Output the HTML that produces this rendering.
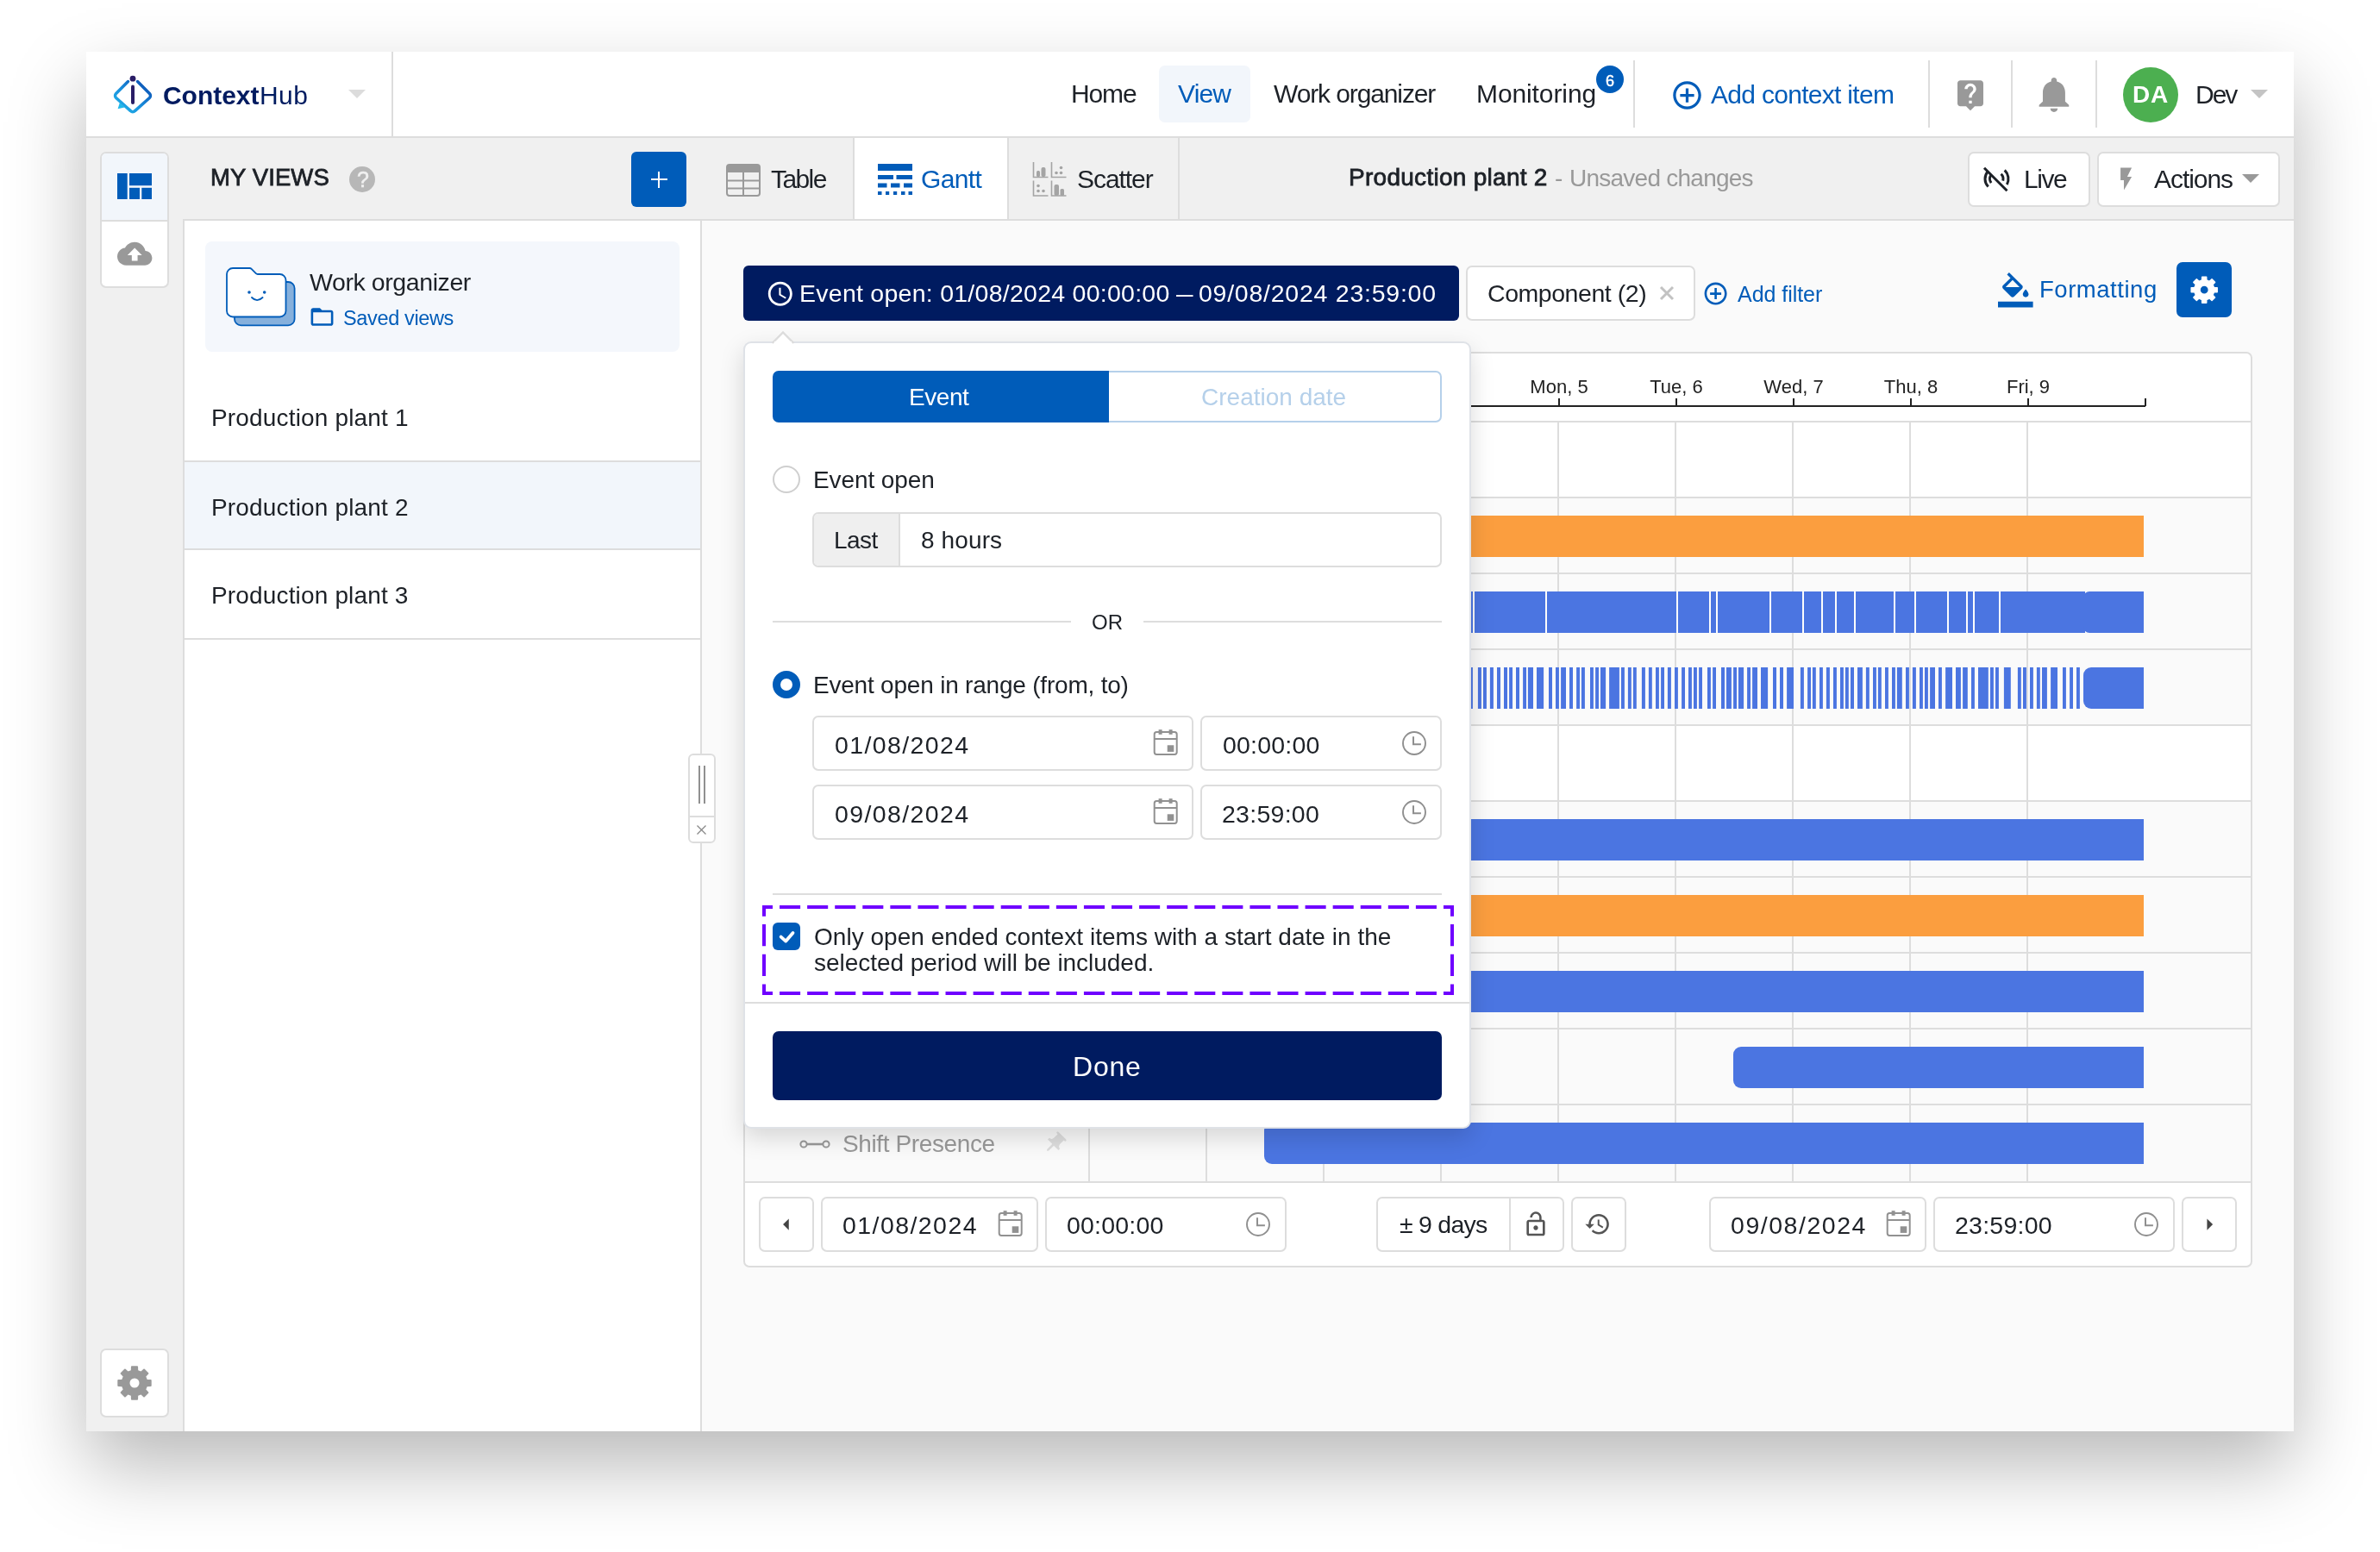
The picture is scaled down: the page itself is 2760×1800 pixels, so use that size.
<!DOCTYPE html>
<html lang="en"><head><meta charset="utf-8"><title>ContextHub - Gantt view</title>
<style>
html,body{margin:0;padding:0;background:#fff;}
body{width:2760px;height:1800px;position:relative;overflow:hidden;font-family:"Liberation Sans",sans-serif;}
body>div,body>svg,body>span{position:absolute;box-sizing:border-box;}
.t{white-space:nowrap;display:block;will-change:transform;}
svg{display:block;overflow:visible;}
</style></head><body>
<div style="left:100px;top:60px;width:2560px;height:1600px;background:#f0f0f0;box-shadow:0 40px 84px rgba(0,0,0,.28);"></div>
<div style="left:100px;top:60px;width:2560px;height:98px;background:#fff;"></div>
<div style="left:100px;top:158px;width:2560px;height:2px;background:#dddddd;"></div>
<div style="left:454px;top:60px;width:2px;height:98px;background:#dddddd;"></div>
<svg style="left:128px;top:84px;" width="52" height="52" viewBox="0 0 52 52"><defs><linearGradient id="lg" x1="0" y1="1" x2="1" y2="0"><stop offset="0" stop-color="#22b8ea"/><stop offset=".45" stop-color="#1a8fdc"/><stop offset="1" stop-color="#0a47ad"/></linearGradient></defs><path d="M20.5 10.5 L6.6 24.4 a3.6 3.6 0 0 0 0 5.1 L23.4 44.6 a3.6 3.6 0 0 0 5.1 0 L45.4 29.5 a3.6 3.6 0 0 0 0 -5.1 L31.5 10.5" fill="none" stroke="url(#lg)" stroke-width="3.5" stroke-linecap="round" stroke-linejoin="round"/><path d="M10.8 35.2 L8.6 42.2 L16.6 40.6 Z" fill="#22b8ea"/><circle cx="26" cy="7.2" r="3.4" fill="#2a1d66"/><path d="M26 16.5 V35" stroke="#2a1d66" stroke-width="4" stroke-linecap="round"/></svg>
<span class="t" style="left:189.30px;top:95.81px;font-size:30px;line-height:30px;color:#001b60;font-weight:700;letter-spacing:-0.042px;">Context</span>
<span class="t" style="left:300.80px;top:95.81px;font-size:30px;line-height:30px;color:#001b60;letter-spacing:0.425px;">Hub</span>
<svg style="left:404px;top:104px;" width="20" height="10" viewBox="0 0 20 10"><path d="M0 0h20l-10 10z" fill="#dcdcdc"/></svg>
<span class="t" style="left:1241.60px;top:93.61px;font-size:30px;line-height:30px;color:#1d2127;letter-spacing:-1.117px;">Home</span>
<div style="left:1344px;top:76px;width:106px;height:66px;background:#f2f6fb;border-radius:7px;"></div>
<span class="t" style="left:1366.00px;top:93.61px;font-size:30px;line-height:30px;color:#005cb9;letter-spacing:-0.833px;">View</span>
<span class="t" style="left:1477.00px;top:93.61px;font-size:30px;line-height:30px;color:#1d2127;letter-spacing:-1.115px;">Work organizer</span>
<span class="t" style="left:1711.60px;top:93.61px;font-size:30px;line-height:30px;color:#1d2127;letter-spacing:-0.100px;">Monitoring</span>
<div style="left:1850.5px;top:76px;width:32px;height:32px;background:#005cb9;border-radius:50%;"></div>
<span class="t" style="left:1367.0px;width:1000px;text-align:center;top:85.06px;font-size:18px;line-height:18px;color:#fff;-webkit-text-stroke:0.5px #fff;">6</span>
<div style="left:1894px;top:70px;width:2px;height:78px;background:#dddddd;"></div>
<svg style="left:1936.5px;top:90.5px;" width="39" height="39" viewBox="0 0 24 24"><path fill="#005cb9" d="M13 7h-2v4H7v2h4v4h2v-4h4v-2h-4V7zm-1-5C6.48 2 2 6.48 2 12s4.48 10 10 10 10-4.48 10-10S17.52 2 12 2zm0 18c-4.41 0-8-3.59-8-8s3.59-8 8-8 8 3.59 8 8-3.59 8-8 8z"/></svg>
<span class="t" style="left:1984.00px;top:94.91px;font-size:30px;line-height:30px;color:#005cb9;letter-spacing:-0.703px;">Add context item</span>
<div style="left:2236px;top:70px;width:2px;height:78px;background:#dddddd;"></div>
<svg style="left:2265px;top:89.8px;" width="40" height="40" viewBox="0 0 24 24"><path fill="#999999" d="M19 2H5c-1.11 0-2 .9-2 2v14c0 1.1.89 2 2 2h4l3 3 3-3h4c1.1 0 2-.9 2-2V4c0-1.1-.9-2-2-2zm-6 16h-2v-2h2v2zm2.07-7.75l-.9.92C13.45 11.9 13 12.5 13 14h-2v-.5c0-1.1.45-2.1 1.17-2.83l1.24-1.26c.37-.36.59-.86.59-1.41 0-1.1-.9-2-2-2s-2 .9-2 2H8c0-2.21 1.79-4 4-4s4 1.79 4 4c0 .88-.36 1.68-.93 2.25z"/></svg>
<div style="left:2332px;top:70px;width:2px;height:78px;background:#dddddd;"></div>
<svg style="left:2356px;top:84.9px;" width="51.9" height="49" viewBox="0 0 24 24" preserveAspectRatio="none"><path fill="#999999" d="M12 22c1.1 0 2-.9 2-2h-4c0 1.1.89 2 2 2zm6-6v-5c0-3.07-1.64-5.64-4.5-6.32V4c0-.83-.67-1.5-1.5-1.5s-1.5.67-1.5 1.5v.68C7.63 5.36 6 7.92 6 11v5l-2 2v1h16v-1l-2-2z"/></svg>
<div style="left:2430px;top:70px;width:2px;height:78px;background:#dddddd;"></div>
<div style="left:2462px;top:78px;width:64px;height:64px;background:#4caf50;border-radius:50%;"></div>
<span class="t" style="left:2472.98px;top:96.00px;font-size:28px;line-height:28px;color:#fff;font-weight:700;letter-spacing:0.860px;">DA</span>
<span class="t" style="left:2545.60px;top:94.81px;font-size:30px;line-height:30px;color:#1d2127;letter-spacing:-2.000px;">Dev</span>
<svg style="left:2610px;top:104px;" width="20" height="10" viewBox="0 0 20 10"><path d="M0 0h20l-10 10z" fill="#c4c4c4"/></svg>
<div style="left:116px;top:176px;width:80px;height:158px;background:#fff;border:2px solid #dddddd;border-radius:7px;overflow:hidden;"><div style="position:absolute;left:0;top:0;width:76px;height:77px;background:#f2f6fb;"></div><div style="position:absolute;left:0;top:77px;width:76px;height:2px;background:#dddddd;"></div></div>
<svg style="left:136px;top:201px;" width="40" height="30" viewBox="0 0 40 30"><g fill="#005cb9"><rect x="0" y="0" width="11.7" height="30"/><rect x="14" y="0" width="26" height="14.2"/><rect x="14" y="16.8" width="12" height="13.2"/><rect x="28.3" y="16.8" width="11.7" height="13.2"/></g></svg>
<svg style="left:135.7px;top:274.3px;" width="40.4" height="40.4" viewBox="0 0 24 24"><path fill="#999999" d="M19.35 10.04C18.67 6.59 15.64 4 12 4 9.11 4 6.6 5.64 5.35 8.04 2.34 8.36 0 10.91 0 14c0 3.31 2.69 6 6 6h13c2.76 0 5-2.24 5-5 0-2.64-2.05-4.78-4.65-4.96zM14 13v4h-4v-4H7l5-5 5 5h-3z"/></svg>
<div style="left:116px;top:1564px;width:80px;height:80px;background:#fff;border:2px solid #dddddd;border-radius:7px;"></div>
<svg style="left:137px;top:1585px;" width="38" height="38" viewBox="0 0 100 100"><path fill="#999999" fill-rule="evenodd" stroke="#999999" stroke-width="5" stroke-linejoin="round" d="M41.42 12.98 L41.79 0.68 L58.21 0.68 L58.58 12.98 L70.11 17.76 L79.07 9.32 L90.68 20.93 L82.24 29.89 L87.02 41.42 L99.32 41.79 L99.32 58.21 L87.02 58.58 L82.24 70.11 L90.68 79.07 L79.07 90.68 L70.11 82.24 L58.58 87.02 L58.21 99.32 L41.79 99.32 L41.42 87.02 L29.89 82.24 L20.93 90.68 L9.32 79.07 L17.76 70.11 L12.98 58.58 L0.68 58.21 L0.68 41.79 L12.98 41.42 L17.76 29.89 L9.32 20.93 L20.93 9.32 L29.89 17.76Z M33.00 50.00 a17 17 0 1 0 34 0 a17 17 0 1 0 -34 0Z"/></svg>
<div style="left:212px;top:254px;width:602px;height:1406px;background:#fff;border:2px solid #dddddd;border-bottom:none;"></div>
<span class="t" style="left:243.60px;top:192.12px;font-size:27.5px;line-height:27.5px;color:#1d2127;-webkit-text-stroke:0.8px #1d2127;letter-spacing:0.107px;">MY VIEWS</span>
<div style="left:405px;top:193px;width:30px;height:30px;background:#b7b7b7;border-radius:50%;"></div>
<span class="t" style="left:-79.39999999999998px;width:1000px;text-align:center;top:195.84px;font-size:25px;line-height:25px;color:#f0f0f0;-webkit-text-stroke:0.6px #f0f0f0;">?</span>
<div style="left:732px;top:176px;width:64px;height:64px;background:#005cb9;border-radius:6px;"></div>
<div style="left:754.5px;top:206.7px;width:19px;height:2.5px;background:#fff;"></div>
<div style="left:762.7px;top:198.5px;width:2.5px;height:19px;background:#fff;"></div>
<div style="left:238px;top:280px;width:550px;height:128px;background:#f4f7fc;border-radius:8px;"></div>
<svg style="left:258px;top:306px;" width="88" height="76" viewBox="0 0 88 76"><rect x="14" y="21" width="69.6" height="50.4" rx="7.5" fill="#86b0dc" stroke="#005cb9" stroke-width="1.8"/><path d="M5 12 a7 7 0 0 1 7 -7 h19.5 a3 3 0 0 1 2.1 .9 l5.2 5.2 a3 3 0 0 0 2.1 .9 h25.6 a7 7 0 0 1 7 7 v35.5 a7 7 0 0 1 -7 7 h-54.5 a7 7 0 0 1 -7 -7 z" fill="#fff" stroke="#005cb9" stroke-width="1.8"/><circle cx="31" cy="33" r="1.8" fill="#005cb9"/><circle cx="48.7" cy="33" r="1.8" fill="#005cb9"/><path d="M34 39 q6 6.2 12.6 0" fill="none" stroke="#005cb9" stroke-width="1.8" stroke-linecap="round"/></svg>
<span class="t" style="left:359.00px;top:312.87px;font-size:28.5px;line-height:28.5px;color:#1d2127;letter-spacing:-0.413px;">Work organizer</span>
<svg style="left:358.2px;top:352.2px;" width="31" height="31" viewBox="0 0 24 24"><path fill="#005cb9" d="M20 6h-8l-2-2H4c-1.1 0-1.99.9-1.99 2L2 18c0 1.1.9 2 2 2h16c1.1 0 2-.9 2-2V8c0-1.1-.9-2-2-2zm0 12H4V8h16v10z"/></svg>
<span class="t" style="left:397.54px;top:358.41px;font-size:23.5px;line-height:23.5px;color:#005cb9;letter-spacing:-0.357px;">Saved views</span>
<div style="left:214px;top:535px;width:598px;height:102px;background:#f2f6fb;"></div>
<div style="left:214px;top:534px;width:598px;height:2px;background:#dddddd;"></div>
<div style="left:214px;top:636px;width:598px;height:2px;background:#dddddd;"></div>
<div style="left:214px;top:739.5px;width:598px;height:2px;background:#dddddd;"></div>
<span class="t" style="left:244.76px;top:470.60px;font-size:28px;line-height:28px;color:#1d2127;letter-spacing:0.166px;">Production plant 1</span>
<span class="t" style="left:244.76px;top:574.60px;font-size:28px;line-height:28px;color:#1d2127;letter-spacing:0.166px;">Production plant 2</span>
<span class="t" style="left:244.76px;top:676.60px;font-size:28px;line-height:28px;color:#1d2127;letter-spacing:0.158px;">Production plant 3</span>
<div style="left:814px;top:256px;width:1846px;height:1404px;background:#fafafa;"></div>
<div style="left:814px;top:254px;width:1846px;height:2px;background:#dddddd;"></div>
<div style="left:991px;top:160px;width:177px;height:94px;background:#fff;"></div>
<div style="left:989px;top:160px;width:2px;height:94px;background:#dddddd;"></div>
<div style="left:1168px;top:160px;width:2px;height:94px;background:#dddddd;"></div>
<div style="left:1366px;top:160px;width:2px;height:94px;background:#dddddd;"></div>
<svg style="left:842px;top:190px;" width="40" height="38" viewBox="0 0 40 38"><rect x="1" y="1" width="38" height="36" rx="3" fill="none" stroke="#999999" stroke-width="2"/><path d="M1 4 a3 3 0 0 1 3 -3 h32 a3 3 0 0 1 3 3 v6 h-38z" fill="#999999"/><path d="M1 19.5h38M1 28.5h38M20 10v27" stroke="#999999" stroke-width="2" fill="none"/></svg>
<span class="t" style="left:893.90px;top:193.10px;font-size:30px;line-height:30px;color:#1d2127;letter-spacing:-1.600px;">Table</span>
<svg style="left:1018px;top:190px;" width="40" height="36" viewBox="0 0 40 36"><g fill="#005cb9"><rect x="0" y="0" width="40" height="8"/><rect x="0" y="13" width="18" height="5"/><rect x="21.5" y="13" width="18.5" height="5"/><rect x="0" y="22.5" width="10.5" height="5"/><rect x="15" y="22.5" width="10.5" height="5"/><rect x="30" y="22.5" width="10" height="5"/><rect x="0" y="32" width="4.5" height="4"/><rect x="9" y="32" width="4.2" height="4"/><rect x="18" y="32" width="4.2" height="4"/><rect x="27" y="32" width="4.5" height="4"/><rect x="35.5" y="32" width="4.5" height="4"/></g></svg>
<span class="t" style="left:1068.20px;top:193.10px;font-size:30px;line-height:30px;color:#005cb9;letter-spacing:-0.637px;">Gantt</span>
<svg style="left:1197px;top:188px;" width="41" height="40" viewBox="0 0 41 40"><g fill="none" stroke="#a4a4a4" stroke-width="1.6"><path d="M1.5 0v17.5h17"/><path d="M22.5 0v17.5h17"/><path d="M1.5 21.5v17.5h17"/><path d="M22.5 21.5v17.5h17"/></g><g fill="#a4a4a4"><rect x="5" y="10" width="4" height="7" rx="1.5"/><rect x="10.5" y="6" width="5" height="11" rx="2"/><circle cx="28" cy="12.5" r="1.8"/><circle cx="33.5" cy="12.5" r="1.8"/><circle cx="33.5" cy="6.5" r="1.8"/><circle cx="7" cy="27.5" r="1.8"/><circle cx="7" cy="33.5" r="1.8"/><circle cx="13" cy="33.5" r="1.8"/><rect x="25.5" y="26" width="5.5" height="13" rx="2"/><rect x="32.5" y="31" width="4.5" height="8" rx="1.5"/></g></svg>
<span class="t" style="left:1248.65px;top:193.10px;font-size:30px;line-height:30px;color:#1d2127;letter-spacing:-1.050px;">Scatter</span>
<span class="t" style="left:1564.06px;top:192.30px;font-size:28px;line-height:28px;color:#1d2127;-webkit-text-stroke:0.8px #1d2127;letter-spacing:0.278px;">Production plant 2</span>
<span class="t" style="left:1802.78px;top:192.50px;font-size:28px;line-height:28px;color:#999999;">-</span>
<span class="t" style="left:1819.70px;top:192.50px;font-size:28px;line-height:28px;color:#999999;letter-spacing:-0.754px;">Unsaved changes</span>
<div style="left:2282px;top:176px;width:142px;height:64px;background:#fff;border:2px solid #dddddd;border-radius:7px;"></div>
<svg style="left:2299px;top:193px;" width="32" height="30" viewBox="0 0 32 30"><g fill="none" stroke="#1d2127" stroke-width="3"><path d="M2 1.8L28.5 28.3"/><path d="M6.34 5.8A13 13 0 0 0 6.65 23.53"/><path d="M10.05 9.93A7.5 7.5 0 0 0 10.09 19.12"/><path d="M25.73 4.43A14 14 0 0 1 28.36 21.07"/><path d="M21.56 8.75A8 8 0 0 1 23.73 16.57"/></g></svg>
<span class="t" style="left:2346.60px;top:192.60px;font-size:30px;line-height:30px;color:#1d2127;letter-spacing:-1.483px;">Live</span>
<div style="left:2432px;top:176px;width:212px;height:64px;background:#fff;border:2px solid #dddddd;border-radius:7px;"></div>
<svg style="left:2449.5px;top:192.2px;" width="31.2" height="31.2" viewBox="0 0 24 24"><path fill="#999999" d="M7 2v11h3v9l7-12h-4l4-8z"/></svg>
<span class="t" style="left:2497.70px;top:192.60px;font-size:30px;line-height:30px;color:#1d2127;letter-spacing:-1.058px;">Actions</span>
<svg style="left:2600px;top:202px;" width="20" height="10" viewBox="0 0 20 10"><path d="M0 0h20l-10 10z" fill="#999999"/></svg>
<div style="left:862px;top:308px;width:830px;height:64px;background:#001b60;border-radius:6px;"></div>
<svg style="left:888.2px;top:324.3px;" width="33.6" height="33.6" viewBox="0 0 24 24"><path fill="#fff" d="M11.99 2C6.47 2 2 6.48 2 12s4.47 10 9.99 10C17.52 22 22 17.52 22 12S17.52 2 11.99 2zM12 20c-4.42 0-8-3.58-8-8s3.58-8 8-8 8 3.58 8 8-3.58 8-8 8zm.5-13H11v6l5.25 3.15.75-1.23-4.5-2.67z"/></svg>
<span class="t" style="left:926.72px;top:326.37px;font-size:28.5px;line-height:28.5px;color:#fff;letter-spacing:0.259px;">Event open: 01/08/2024 00:00:00</span>
<span class="t" style="left:1363.80px;top:326.37px;font-size:28.5px;line-height:28.5px;color:#fff;transform:scaleX(.68);transform-origin:0 50%;">—</span>
<span class="t" style="left:1390.40px;top:326.37px;font-size:28.5px;line-height:28.5px;color:#fff;letter-spacing:0.750px;">09/08/2024 23:59:00</span>
<div style="left:1700px;top:308px;width:266px;height:64px;background:#fff;border:2px solid #dddddd;border-radius:7px;"></div>
<span class="t" style="left:1724.58px;top:325.67px;font-size:28.5px;line-height:28.5px;color:#1d2127;letter-spacing:-0.455px;">Component (2)</span>
<svg style="left:1925px;top:332px;" width="16" height="16" viewBox="0 0 16 16"><path d="M1 1L15 15M15 1L1 15" stroke="#c2c2c2" stroke-width="3"/></svg>
<svg style="left:1974.4px;top:325px;" width="31.2" height="31.2" viewBox="0 0 24 24"><path fill="#005cb9" d="M13 7h-2v4H7v2h4v4h2v-4h4v-2h-4V7zm-1-5C6.48 2 2 6.48 2 12s4.48 10 10 10 10-4.48 10-10S17.52 2 12 2zm0 18c-4.41 0-8-3.59-8-8s3.59-8 8-8 8 3.59 8 8-3.59 8-8 8z"/></svg>
<span class="t" style="left:2015.00px;top:328.54px;font-size:25px;line-height:25px;color:#005cb9;letter-spacing:-0.042px;">Add filter</span>
<svg style="left:2317.2px;top:316px;" width="40.6" height="40.6" viewBox="0 0 24 24"><path fill="#005cb9" d="M16.56 8.94L7.62 0 6.21 1.41l2.38 2.38-5.15 5.15c-.59.59-.59 1.54 0 2.12l5.5 5.5c.29.29.68.44 1.06.44s.77-.15 1.06-.44l5.5-5.5c.59-.58.59-1.53 0-2.12zM5.21 10L10 5.21 14.79 10H5.21zM19 11.5s-2 2.17-2 3.5c0 1.1.9 2 2 2s2-.9 2-2c0-1.33-2-3.5-2-3.5zM0 20h24v4H0z"/></svg>
<span class="t" style="left:2365.00px;top:322.32px;font-size:27.5px;line-height:27.5px;color:#005cb9;letter-spacing:0.533px;">Formatting</span>
<div style="left:2524px;top:304px;width:64px;height:64px;background:#005cb9;border-radius:7px;"></div>
<svg style="left:2540.8px;top:320.8px;" width="30.4" height="30.4" viewBox="0 0 100 100"><path fill="#fff" fill-rule="evenodd" stroke="#fff" stroke-width="5" stroke-linejoin="round" d="M41.42 12.98 L41.79 0.68 L58.21 0.68 L58.58 12.98 L70.11 17.76 L79.07 9.32 L90.68 20.93 L82.24 29.89 L87.02 41.42 L99.32 41.79 L99.32 58.21 L87.02 58.58 L82.24 70.11 L90.68 79.07 L79.07 90.68 L70.11 82.24 L58.58 87.02 L58.21 99.32 L41.79 99.32 L41.42 87.02 L29.89 82.24 L20.93 90.68 L9.32 79.07 L17.76 70.11 L12.98 58.58 L0.68 58.21 L0.68 41.79 L12.98 41.42 L17.76 29.89 L9.32 20.93 L20.93 9.32 L29.89 17.76Z M33.00 50.00 a17 17 0 1 0 34 0 a17 17 0 1 0 -34 0Z"/></svg>
<div style="left:862px;top:408px;width:1750px;height:1062px;background:#fff;border:2px solid #dddddd;border-radius:7px;"></div>
<div style="left:864px;top:578px;width:1746px;height:86px;background:#fafafa;"></div>
<div style="left:864px;top:666px;width:1746px;height:86px;background:#fafafa;"></div>
<div style="left:864px;top:754px;width:1746px;height:86px;background:#fafafa;"></div>
<div style="left:864px;top:930px;width:1746px;height:86px;background:#fafafa;"></div>
<div style="left:864px;top:1018px;width:1746px;height:86px;background:#fafafa;"></div>
<div style="left:864px;top:1106px;width:1746px;height:86px;background:#fafafa;"></div>
<div style="left:864px;top:1194px;width:1746px;height:86px;background:#fafafa;"></div>
<div style="left:864px;top:1282px;width:1746px;height:88px;background:#fafafa;"></div>
<div style="left:864px;top:488px;width:1746px;height:2px;background:#dddddd;"></div>
<div style="left:864px;top:576px;width:1746px;height:2px;background:#dddddd;"></div>
<div style="left:864px;top:664px;width:1746px;height:2px;background:#dddddd;"></div>
<div style="left:864px;top:752px;width:1746px;height:2px;background:#dddddd;"></div>
<div style="left:864px;top:840px;width:1746px;height:2px;background:#dddddd;"></div>
<div style="left:864px;top:928px;width:1746px;height:2px;background:#dddddd;"></div>
<div style="left:864px;top:1016px;width:1746px;height:2px;background:#dddddd;"></div>
<div style="left:864px;top:1104px;width:1746px;height:2px;background:#dddddd;"></div>
<div style="left:864px;top:1192px;width:1746px;height:2px;background:#dddddd;"></div>
<div style="left:864px;top:1280px;width:1746px;height:2px;background:#dddddd;"></div>
<div style="left:864px;top:1370px;width:1746px;height:2px;background:#dddddd;"></div>
<div style="left:1262px;top:490px;width:2px;height:881px;background:#dddddd;"></div>
<div style="left:1398px;top:490px;width:2px;height:881px;background:#dddddd;"></div>
<div style="left:1534px;top:490px;width:2px;height:881px;background:#dddddd;"></div>
<div style="left:1670px;top:490px;width:2px;height:881px;background:#dddddd;"></div>
<div style="left:1806px;top:490px;width:2px;height:881px;background:#dddddd;"></div>
<div style="left:1942px;top:490px;width:2px;height:881px;background:#dddddd;"></div>
<div style="left:2078px;top:490px;width:2px;height:881px;background:#dddddd;"></div>
<div style="left:2214px;top:490px;width:2px;height:881px;background:#dddddd;"></div>
<div style="left:2350px;top:490px;width:2px;height:881px;background:#dddddd;"></div>
<div style="left:1400px;top:470px;width:1088px;height:2px;background:#222;"></div>
<div style="left:1398.8px;top:462px;width:2px;height:9px;background:#222;"></div>
<div style="left:1534.8px;top:462px;width:2px;height:9px;background:#222;"></div>
<div style="left:1670.8px;top:462px;width:2px;height:9px;background:#222;"></div>
<div style="left:1806.8px;top:462px;width:2px;height:9px;background:#222;"></div>
<div style="left:1942.8px;top:462px;width:2px;height:9px;background:#222;"></div>
<div style="left:2078.8px;top:462px;width:2px;height:9px;background:#222;"></div>
<div style="left:2214.8px;top:462px;width:2px;height:9px;background:#222;"></div>
<div style="left:2350.8px;top:462px;width:2px;height:9px;background:#222;"></div>
<div style="left:2486.8px;top:462px;width:2px;height:9px;background:#222;"></div>
<span class="t" style="left:1307.7px;width:1000px;text-align:center;top:437.58px;font-size:22px;line-height:22px;color:#222;">Mon, 5</span>
<span class="t" style="left:1443.7px;width:1000px;text-align:center;top:437.58px;font-size:22px;line-height:22px;color:#222;">Tue, 6</span>
<span class="t" style="left:1579.6999999999998px;width:1000px;text-align:center;top:437.58px;font-size:22px;line-height:22px;color:#222;">Wed, 7</span>
<span class="t" style="left:1715.6999999999998px;width:1000px;text-align:center;top:437.58px;font-size:22px;line-height:22px;color:#222;">Thu, 8</span>
<span class="t" style="left:1851.6999999999998px;width:1000px;text-align:center;top:437.58px;font-size:22px;line-height:22px;color:#222;">Fri, 9</span>
<div style="left:1466px;top:598px;width:1020px;height:48px;background:#fb9e3f;border-radius:0;"></div>
<div style="left:1466px;top:686px;width:951.5999999999999px;height:48px;background:#4b75e1;border-radius:0;"></div>
<div style="left:2416px;top:686px;width:70px;height:48px;background:#4b75e1;border-radius:7px 0 0 7px;"></div>
<div style="left:1707.9px;top:686px;width:2.3px;height:48px;background:#fcfcfc;"></div>
<div style="left:1791.8px;top:686px;width:2.3px;height:48px;background:#fcfcfc;"></div>
<div style="left:1943.8px;top:686px;width:2.3px;height:48px;background:#fcfcfc;"></div>
<div style="left:1981.8px;top:686px;width:2.3px;height:48px;background:#fcfcfc;"></div>
<div style="left:1989.8px;top:686px;width:2.3px;height:48px;background:#fcfcfc;"></div>
<div style="left:2051.8px;top:686px;width:2.3px;height:48px;background:#fcfcfc;"></div>
<div style="left:2089.8px;top:686px;width:2.3px;height:48px;background:#fcfcfc;"></div>
<div style="left:2111.8px;top:686px;width:2.3px;height:48px;background:#fcfcfc;"></div>
<div style="left:2127.8px;top:686px;width:2.3px;height:48px;background:#fcfcfc;"></div>
<div style="left:2149.8px;top:686px;width:2.3px;height:48px;background:#fcfcfc;"></div>
<div style="left:2195.8px;top:686px;width:2.3px;height:48px;background:#fcfcfc;"></div>
<div style="left:2219.8px;top:686px;width:2.3px;height:48px;background:#fcfcfc;"></div>
<div style="left:2257.8px;top:686px;width:2.3px;height:48px;background:#fcfcfc;"></div>
<div style="left:2279.8px;top:686px;width:2.3px;height:48px;background:#fcfcfc;"></div>
<div style="left:2287.8px;top:686px;width:2.3px;height:48px;background:#fcfcfc;"></div>
<div style="left:2317.8px;top:686px;width:2.3px;height:48px;background:#fcfcfc;"></div>
<svg style="left:1460px;top:774px;" width="1030" height="48" viewBox="0 0 1030 48"><g fill="#4b75e1"><rect x="245.9" y="0" width="2.0" height="48"/><rect x="253.9" y="0" width="4.0" height="48"/><rect x="260.0" y="0" width="3.9" height="48"/><rect x="267.9" y="0" width="4.0" height="48"/><rect x="276.0" y="0" width="4.0" height="48"/><rect x="284.0" y="0" width="4.0" height="48"/><rect x="290.1" y="0" width="3.9" height="48"/><rect x="298.0" y="0" width="4.0" height="48"/><rect x="306.1" y="0" width="3.9" height="48"/><rect x="311.9" y="0" width="6.1" height="48"/><rect x="322.0" y="0" width="8.1" height="48"/><rect x="336.0" y="0" width="4.0" height="48"/><rect x="344.0" y="0" width="3.9" height="48"/><rect x="350.1" y="0" width="5.9" height="48"/><rect x="360.0" y="0" width="4.0" height="48"/><rect x="368.1" y="0" width="3.9" height="48"/><rect x="373.9" y="0" width="4.0" height="48"/><rect x="384.0" y="0" width="3.9" height="48"/><rect x="390.1" y="0" width="3.9" height="48"/><rect x="396.0" y="0" width="6.1" height="48"/><rect x="406.1" y="0" width="11.8" height="48"/><rect x="420.0" y="0" width="3.9" height="48"/><rect x="427.9" y="0" width="3.9" height="48"/><rect x="433.9" y="0" width="3.9" height="48"/><rect x="443.9" y="0" width="4.0" height="48"/><rect x="451.9" y="0" width="3.9" height="48"/><rect x="460.0" y="0" width="3.9" height="48"/><rect x="466.1" y="0" width="3.9" height="48"/><rect x="473.9" y="0" width="4.0" height="48"/><rect x="482.0" y="0" width="3.9" height="48"/><rect x="490.1" y="0" width="3.9" height="48"/><rect x="498.0" y="0" width="3.9" height="48"/><rect x="504.0" y="0" width="3.9" height="48"/><rect x="510.1" y="0" width="3.9" height="48"/><rect x="520.0" y="0" width="3.9" height="48"/><rect x="526.1" y="0" width="3.9" height="48"/><rect x="536.0" y="0" width="4.0" height="48"/><rect x="542.0" y="0" width="5.9" height="48"/><rect x="550.1" y="0" width="3.9" height="48"/><rect x="556.0" y="0" width="6.1" height="48"/><rect x="566.1" y="0" width="3.9" height="48"/><rect x="572.1" y="0" width="5.9" height="48"/><rect x="582.0" y="0" width="8.1" height="48"/><rect x="596.0" y="0" width="4.0" height="48"/><rect x="604.0" y="0" width="4.0" height="48"/><rect x="612.1" y="0" width="7.9" height="48"/><rect x="627.9" y="0" width="4.0" height="48"/><rect x="636.1" y="0" width="3.9" height="48"/><rect x="641.9" y="0" width="3.9" height="48"/><rect x="650.0" y="0" width="3.9" height="48"/><rect x="657.9" y="0" width="4.0" height="48"/><rect x="666.0" y="0" width="3.9" height="48"/><rect x="674.0" y="0" width="3.9" height="48"/><rect x="679.9" y="0" width="3.9" height="48"/><rect x="686.0" y="0" width="4.0" height="48"/><rect x="694.0" y="0" width="5.9" height="48"/><rect x="703.9" y="0" width="3.9" height="48"/><rect x="712.0" y="0" width="3.9" height="48"/><rect x="717.9" y="0" width="3.9" height="48"/><rect x="726.0" y="0" width="3.9" height="48"/><rect x="734.0" y="0" width="3.9" height="48"/><rect x="739.9" y="0" width="5.9" height="48"/><rect x="750.0" y="0" width="3.9" height="48"/><rect x="757.9" y="0" width="4.0" height="48"/><rect x="766.0" y="0" width="3.9" height="48"/><rect x="772.0" y="0" width="3.9" height="48"/><rect x="778.1" y="0" width="5.9" height="48"/><rect x="788.0" y="0" width="3.9" height="48"/><rect x="796.1" y="0" width="7.9" height="48"/><rect x="808.0" y="0" width="5.9" height="48"/><rect x="816.1" y="0" width="5.7" height="48"/><rect x="826.0" y="0" width="3.9" height="48"/><rect x="834.0" y="0" width="11.8" height="48"/><rect x="848.0" y="0" width="3.9" height="48"/><rect x="854.0" y="0" width="3.9" height="48"/><rect x="863.9" y="0" width="7.9" height="48"/><rect x="879.9" y="0" width="3.9" height="48"/><rect x="886.0" y="0" width="3.9" height="48"/><rect x="894.0" y="0" width="3.9" height="48"/><rect x="901.9" y="0" width="3.9" height="48"/><rect x="908.0" y="0" width="5.9" height="48"/><rect x="918.1" y="0" width="7.9" height="48"/><rect x="932.0" y="0" width="3.9" height="48"/><rect x="940.1" y="0" width="3.9" height="48"/><rect x="948.0" y="0" width="3.9" height="48"/><rect x="6.0" y="0" width="4.0" height="48"/><rect x="14.0" y="0" width="4.0" height="48"/><rect x="22.0" y="0" width="4.0" height="48"/><rect x="30.0" y="0" width="4.0" height="48"/><rect x="38.0" y="0" width="4.0" height="48"/><rect x="46.0" y="0" width="4.0" height="48"/><rect x="54.0" y="0" width="4.0" height="48"/><rect x="62.0" y="0" width="4.0" height="48"/><rect x="70.0" y="0" width="4.0" height="48"/><rect x="78.0" y="0" width="4.0" height="48"/><rect x="86.0" y="0" width="4.0" height="48"/><rect x="94.0" y="0" width="4.0" height="48"/><rect x="102.0" y="0" width="4.0" height="48"/><rect x="110.0" y="0" width="4.0" height="48"/><rect x="118.0" y="0" width="4.0" height="48"/><rect x="126.0" y="0" width="4.0" height="48"/><rect x="134.0" y="0" width="4.0" height="48"/><rect x="142.0" y="0" width="4.0" height="48"/><rect x="150.0" y="0" width="4.0" height="48"/><rect x="158.0" y="0" width="4.0" height="48"/><rect x="166.0" y="0" width="4.0" height="48"/><rect x="174.0" y="0" width="4.0" height="48"/><rect x="182.0" y="0" width="4.0" height="48"/><rect x="190.0" y="0" width="4.0" height="48"/><rect x="198.0" y="0" width="4.0" height="48"/><rect x="206.0" y="0" width="4.0" height="48"/><rect x="214.0" y="0" width="4.0" height="48"/><rect x="222.0" y="0" width="4.0" height="48"/><rect x="230.0" y="0" width="4.0" height="48"/><rect x="238.0" y="0" width="4.0" height="48"/></g></svg>
<div style="left:2416px;top:774px;width:70px;height:48px;background:#4b75e1;border-radius:9px 0 0 9px;"></div>
<div style="left:1466px;top:950px;width:1020px;height:48px;background:#4b75e1;border-radius:0;"></div>
<div style="left:1466px;top:1038px;width:1020px;height:48px;background:#fb9e3f;border-radius:0;"></div>
<div style="left:1466px;top:1126px;width:1020px;height:48px;background:#4b75e1;border-radius:0;"></div>
<div style="left:2010px;top:1214px;width:476px;height:48px;background:#4b75e1;border-radius:9px 0 0 9px;"></div>
<div style="left:1466px;top:1302px;width:1020px;height:48px;background:#4b75e1;border-radius:9px 0 0 9px;"></div>
<svg style="left:927px;top:1321px;" width="36" height="12" viewBox="0 0 36 12"><g fill="none" stroke="#999999" stroke-width="2"><circle cx="5" cy="6" r="3.6"/><circle cx="31" cy="6" r="3.6"/><path d="M8.6 6H27.4" stroke-width="2.6"/></g></svg>
<span class="t" style="left:977.14px;top:1312.50px;font-size:28px;line-height:28px;color:#999999;letter-spacing:-0.386px;">Shift Presence</span>
<svg style="left:1208px;top:1310.5px;transform:rotate(45deg);" width="30" height="30" viewBox="0 0 24 24"><path fill="#dedede" d="M16 9V4h1c.55 0 1-.45 1-1s-.45-1-1-1H7c-.55 0-1 .45-1 1s.45 1 1 1h1v5c0 1.66-1.34 3-3 3v2h5.97v7l1 1 1-1v-7H19v-2c-1.66 0-3-1.34-3-3z"/></svg>
<div style="left:880px;top:1388px;width:64px;height:64px;background:#fff;border:2px solid #dddddd;border-radius:7px;"></div>
<svg style="left:895.5px;top:1404.3px;" width="32.2" height="32.2" viewBox="0 0 24 24"><path fill="#444" d="M14 7l-5 5 5 5V7z"/></svg>
<div style="left:952px;top:1388px;width:252px;height:64px;background:#fff;border:2px solid #dddddd;border-radius:7px;"></div>
<span class="t" style="left:977.40px;top:1407.07px;font-size:28.5px;line-height:28.5px;color:#1d2127;letter-spacing:1.430px;">01/08/2024</span>
<svg style="left:1157px;top:1404px;" width="30" height="31" viewBox="0 0 30 31"><rect x="1.7" y="3.1" width="26" height="25.8" rx="2.6" fill="none" stroke="#919191" stroke-width="2"/><path d="M1.7 11H27.7" stroke="#919191" stroke-width="2"/><rect x="6.6" y="0.2" width="4" height="5.6" fill="#919191"/><rect x="18.6" y="0.2" width="4" height="5.6" fill="#919191"/><rect x="16.7" y="18.3" width="7.6" height="7.6" fill="#919191"/></svg>
<div style="left:1212px;top:1388px;width:280px;height:64px;background:#fff;border:2px solid #dddddd;border-radius:7px;"></div>
<span class="t" style="left:1237.40px;top:1407.07px;font-size:28.5px;line-height:28.5px;color:#1d2127;letter-spacing:0.190px;">00:00:00</span>
<svg style="left:1444.4px;top:1404.8px;" width="30" height="30" viewBox="0 0 30 30"><circle cx="15" cy="15" r="13" fill="none" stroke="#8f8f8f" stroke-width="1.9"/><path d="M14 7.3 V16.2 H22.9" fill="none" stroke="#8f8f8f" stroke-width="2"/></svg>
<div style="left:1596px;top:1388px;width:218px;height:64px;background:#fff;border:2px solid #dddddd;border-radius:7px;"></div>
<div style="left:1750px;top:1390px;width:2px;height:60px;background:#dddddd;"></div>
<span class="t" style="left:1623.14px;top:1406.07px;font-size:28.5px;line-height:28.5px;color:#1d2127;letter-spacing:-0.748px;">± 9 days</span>
<svg style="left:1765.2px;top:1403.8px;" width="32" height="32" viewBox="0 0 24 24"><path fill="#555" d="M12 17c1.1 0 2-.9 2-2s-.9-2-2-2-2 .9-2 2 .9 2 2 2zm6-9h-1V6c0-2.76-2.24-5-5-5S7 3.24 7 6h1.9c0-1.71 1.39-3.1 3.1-3.1 1.71 0 3.1 1.39 3.1 3.1v2H6c-1.1 0-2 .9-2 2v10c0 1.1.9 2 2 2h12c1.1 0 2-.9 2-2V10c0-1.1-.9-2-2-2zm0 12H6V10h12v10z"/></svg>
<div style="left:1822px;top:1388px;width:64px;height:64px;background:#fff;border:2px solid #dddddd;border-radius:7px;"></div>
<svg style="left:1836.7px;top:1403.8px;" width="31.5" height="31.5" viewBox="0 0 24 24"><path fill="#555" d="M13 3c-4.97 0-9 4.03-9 9H1l3.89 3.89.07.14L9 12H6c0-3.87 3.13-7 7-7s7 3.13 7 7-3.13 7-7 7c-1.93 0-3.68-.79-4.94-2.06l-1.42 1.42C8.27 19.99 10.51 21 13 21c4.97 0 9-4.03 9-9s-4.03-9-9-9zm-1 5v5l4.28 2.54.72-1.21-3.5-2.08V8H12z"/></svg>
<div style="left:1982px;top:1388px;width:252px;height:64px;background:#fff;border:2px solid #dddddd;border-radius:7px;"></div>
<span class="t" style="left:2007.00px;top:1407.07px;font-size:28.5px;line-height:28.5px;color:#1d2127;letter-spacing:1.530px;">09/08/2024</span>
<svg style="left:2186.8px;top:1404px;" width="30" height="31" viewBox="0 0 30 31"><rect x="1.7" y="3.1" width="26" height="25.8" rx="2.6" fill="none" stroke="#919191" stroke-width="2"/><path d="M1.7 11H27.7" stroke="#919191" stroke-width="2"/><rect x="6.6" y="0.2" width="4" height="5.6" fill="#919191"/><rect x="18.6" y="0.2" width="4" height="5.6" fill="#919191"/><rect x="16.7" y="18.3" width="7.6" height="7.6" fill="#919191"/></svg>
<div style="left:2242px;top:1388px;width:280px;height:64px;background:#fff;border:2px solid #dddddd;border-radius:7px;"></div>
<span class="t" style="left:2266.88px;top:1407.07px;font-size:28.5px;line-height:28.5px;color:#1d2127;letter-spacing:0.237px;">23:59:00</span>
<svg style="left:2474.4px;top:1404.8px;" width="30" height="30" viewBox="0 0 30 30"><circle cx="15" cy="15" r="13" fill="none" stroke="#8f8f8f" stroke-width="1.9"/><path d="M14 7.3 V16.2 H22.9" fill="none" stroke="#8f8f8f" stroke-width="2"/></svg>
<div style="left:2530px;top:1388px;width:64px;height:64px;background:#fff;border:2px solid #dddddd;border-radius:7px;"></div>
<svg style="left:2545.9px;top:1404.3px;" width="32.2" height="32.2" viewBox="0 0 24 24"><path fill="#444" d="M10 17l5-5-5-5v10z"/></svg>
<div style="left:798px;top:874px;width:32px;height:104px;background:#fff;border:2px solid #dddddd;border-radius:6px;"></div>
<div style="left:800px;top:946px;width:28px;height:2px;background:#dddddd;"></div>
<div style="left:810px;top:888px;width:2px;height:44px;background:#909090;"></div>
<div style="left:816px;top:888px;width:2px;height:44px;background:#909090;"></div>
<svg style="left:807.5px;top:957px;" width="11" height="11" viewBox="0 0 11 11"><path d="M0.5 0.5L10.5 10.5M10.5 0.5L0.5 10.5" stroke="#888" stroke-width="1.3"/></svg>
<div style="left:862px;top:396px;width:844px;height:913px;background:#fff;border:2px solid #dfe2e7;border-radius:9px;box-shadow:0 10px 28px rgba(0,0,0,.15);"></div>
<svg style="left:890px;top:380px;" width="36" height="20" viewBox="890 380 36 20"><path d="M895.6 398 L908 385.4 L920.4 398" fill="#fff" stroke="#dcdcdc" stroke-width="2.4"/></svg>
<div style="left:898px;top:396.2px;width:20px;height:3px;background:#fff;"></div>
<div style="left:1284px;top:430px;width:388px;height:60px;background:#fff;border:2px solid #b5d0ea;border-radius:0 7px 7px 0;"></div>
<div style="left:896px;top:430px;width:390px;height:60px;background:#005cb9;border-radius:7px 0 0 7px;"></div>
<span class="t" style="left:1054.46px;top:446.70px;font-size:28px;line-height:28px;color:#fff;letter-spacing:-0.425px;">Event</span>
<span class="t" style="left:1393.40px;top:446.70px;font-size:28px;line-height:28px;color:#b5d0ea;letter-spacing:0.007px;">Creation date</span>
<div style="left:896px;top:540px;width:32px;height:32px;background:#fff;border:2px solid #cfcfcf;border-radius:50%;"></div>
<span class="t" style="left:942.56px;top:542.90px;font-size:28px;line-height:28px;color:#1d2127;letter-spacing:-0.084px;">Event open</span>
<div style="left:942px;top:594px;width:730px;height:64px;background:#fff;border:2px solid #dddddd;border-radius:7px;overflow:hidden;"><div style="position:absolute;left:0;top:0;width:98px;height:60px;background:#efefef;border-right:2px solid #dddddd;"></div></div>
<span class="t" style="left:966.76px;top:613.00px;font-size:28px;line-height:28px;color:#1d2127;letter-spacing:-0.513px;">Last</span>
<span class="t" style="left:1067.68px;top:613.00px;font-size:28px;line-height:28px;color:#1d2127;letter-spacing:0.120px;">8 hours</span>
<div style="left:896px;top:719.5px;width:346px;height:2px;background:#dddddd;"></div>
<div style="left:1326px;top:719.5px;width:346px;height:2px;background:#dddddd;"></div>
<span class="t" style="left:1265.92px;top:709.98px;font-size:24px;line-height:24px;color:#1d2127;letter-spacing:0.040px;">OR</span>
<div style="left:896px;top:778px;width:32px;height:32px;background:#fff;border:9px solid #005cb9;border-radius:50%;"></div>
<span class="t" style="left:942.56px;top:780.60px;font-size:28px;line-height:28px;color:#1d2127;letter-spacing:-0.209px;">Event open in range (from, to)</span>
<div style="left:942px;top:830px;width:442px;height:64px;background:#fff;border:2px solid #dddddd;border-radius:7px;"></div>
<div style="left:1392px;top:830px;width:280px;height:64px;background:#fff;border:2px solid #dddddd;border-radius:7px;"></div>
<span class="t" style="left:967.60px;top:850.17px;font-size:28.5px;line-height:28.5px;color:#1d2127;letter-spacing:1.396px;">01/08/2024</span>
<span class="t" style="left:1417.70px;top:850.17px;font-size:28.5px;line-height:28.5px;color:#1d2127;letter-spacing:0.204px;">00:00:00</span>
<svg style="left:1337px;top:846px;" width="30" height="31" viewBox="0 0 30 31"><rect x="1.7" y="3.1" width="26" height="25.8" rx="2.6" fill="none" stroke="#919191" stroke-width="2"/><path d="M1.7 11H27.7" stroke="#919191" stroke-width="2"/><rect x="6.6" y="0.2" width="4" height="5.6" fill="#919191"/><rect x="18.6" y="0.2" width="4" height="5.6" fill="#919191"/><rect x="16.7" y="18.3" width="7.6" height="7.6" fill="#919191"/></svg>
<svg style="left:1624.5px;top:846.8px;" width="30" height="30" viewBox="0 0 30 30"><circle cx="15" cy="15" r="13" fill="none" stroke="#8f8f8f" stroke-width="1.9"/><path d="M14 7.3 V16.2 H22.9" fill="none" stroke="#8f8f8f" stroke-width="2"/></svg>
<div style="left:942px;top:910px;width:442px;height:64px;background:#fff;border:2px solid #dddddd;border-radius:7px;"></div>
<div style="left:1392px;top:910px;width:280px;height:64px;background:#fff;border:2px solid #dddddd;border-radius:7px;"></div>
<span class="t" style="left:967.60px;top:930.17px;font-size:28.5px;line-height:28.5px;color:#1d2127;letter-spacing:1.396px;">09/08/2024</span>
<span class="t" style="left:1417.28px;top:930.17px;font-size:28.5px;line-height:28.5px;color:#1d2127;letter-spacing:0.265px;">23:59:00</span>
<svg style="left:1337px;top:926px;" width="30" height="31" viewBox="0 0 30 31"><rect x="1.7" y="3.1" width="26" height="25.8" rx="2.6" fill="none" stroke="#919191" stroke-width="2"/><path d="M1.7 11H27.7" stroke="#919191" stroke-width="2"/><rect x="6.6" y="0.2" width="4" height="5.6" fill="#919191"/><rect x="18.6" y="0.2" width="4" height="5.6" fill="#919191"/><rect x="16.7" y="18.3" width="7.6" height="7.6" fill="#919191"/></svg>
<svg style="left:1624.5px;top:926.8px;" width="30" height="30" viewBox="0 0 30 30"><circle cx="15" cy="15" r="13" fill="none" stroke="#8f8f8f" stroke-width="1.9"/><path d="M14 7.3 V16.2 H22.9" fill="none" stroke="#8f8f8f" stroke-width="2"/></svg>
<div style="left:896px;top:1036px;width:776px;height:2px;background:#dddddd;"></div>
<svg style="left:880px;top:1046px;" width="812" height="112" viewBox="880 1046 812 112"><g stroke="#6f00ff" stroke-width="4" fill="none"><path d="M884 1052H1686" stroke-dasharray="24.06 8.02" stroke-dashoffset="12.03"/><path d="M884 1152H1686" stroke-dasharray="24.06 8.02" stroke-dashoffset="12.03"/><path d="M886 1050V1154" stroke-dasharray="25.27 9.4" stroke-dashoffset="12.63"/><path d="M1684 1050V1154" stroke-dasharray="25.27 9.4" stroke-dashoffset="12.63"/></g></svg>
<div style="left:896px;top:1070px;width:32px;height:32px;background:#005cb9;border-radius:6px;"></div>
<svg style="left:896px;top:1070px;" width="32" height="32" viewBox="0 0 32 32"><path d="M9.7 16.6L15.3 21.6L23.5 12" fill="none" stroke="#fff" stroke-width="3.8" stroke-linecap="round" stroke-linejoin="round"/></svg>
<span class="t" style="left:943.54px;top:1072.60px;font-size:28px;line-height:28px;color:#1d2127;letter-spacing:0.032px;">Only open ended context items with a start date in the</span>
<span class="t" style="left:944.10px;top:1102.80px;font-size:28px;line-height:28px;color:#1d2127;letter-spacing:-0.036px;">selected period will be included.</span>
<div style="left:864px;top:1162px;width:840px;height:2px;background:#dddddd;"></div>
<div style="left:896px;top:1196px;width:776px;height:80px;background:#001b60;border-radius:7px;"></div>
<span class="t" style="left:1244.04px;top:1220.71px;font-size:32px;line-height:32px;color:#fff;letter-spacing:0.787px;">Done</span>
</body></html>
